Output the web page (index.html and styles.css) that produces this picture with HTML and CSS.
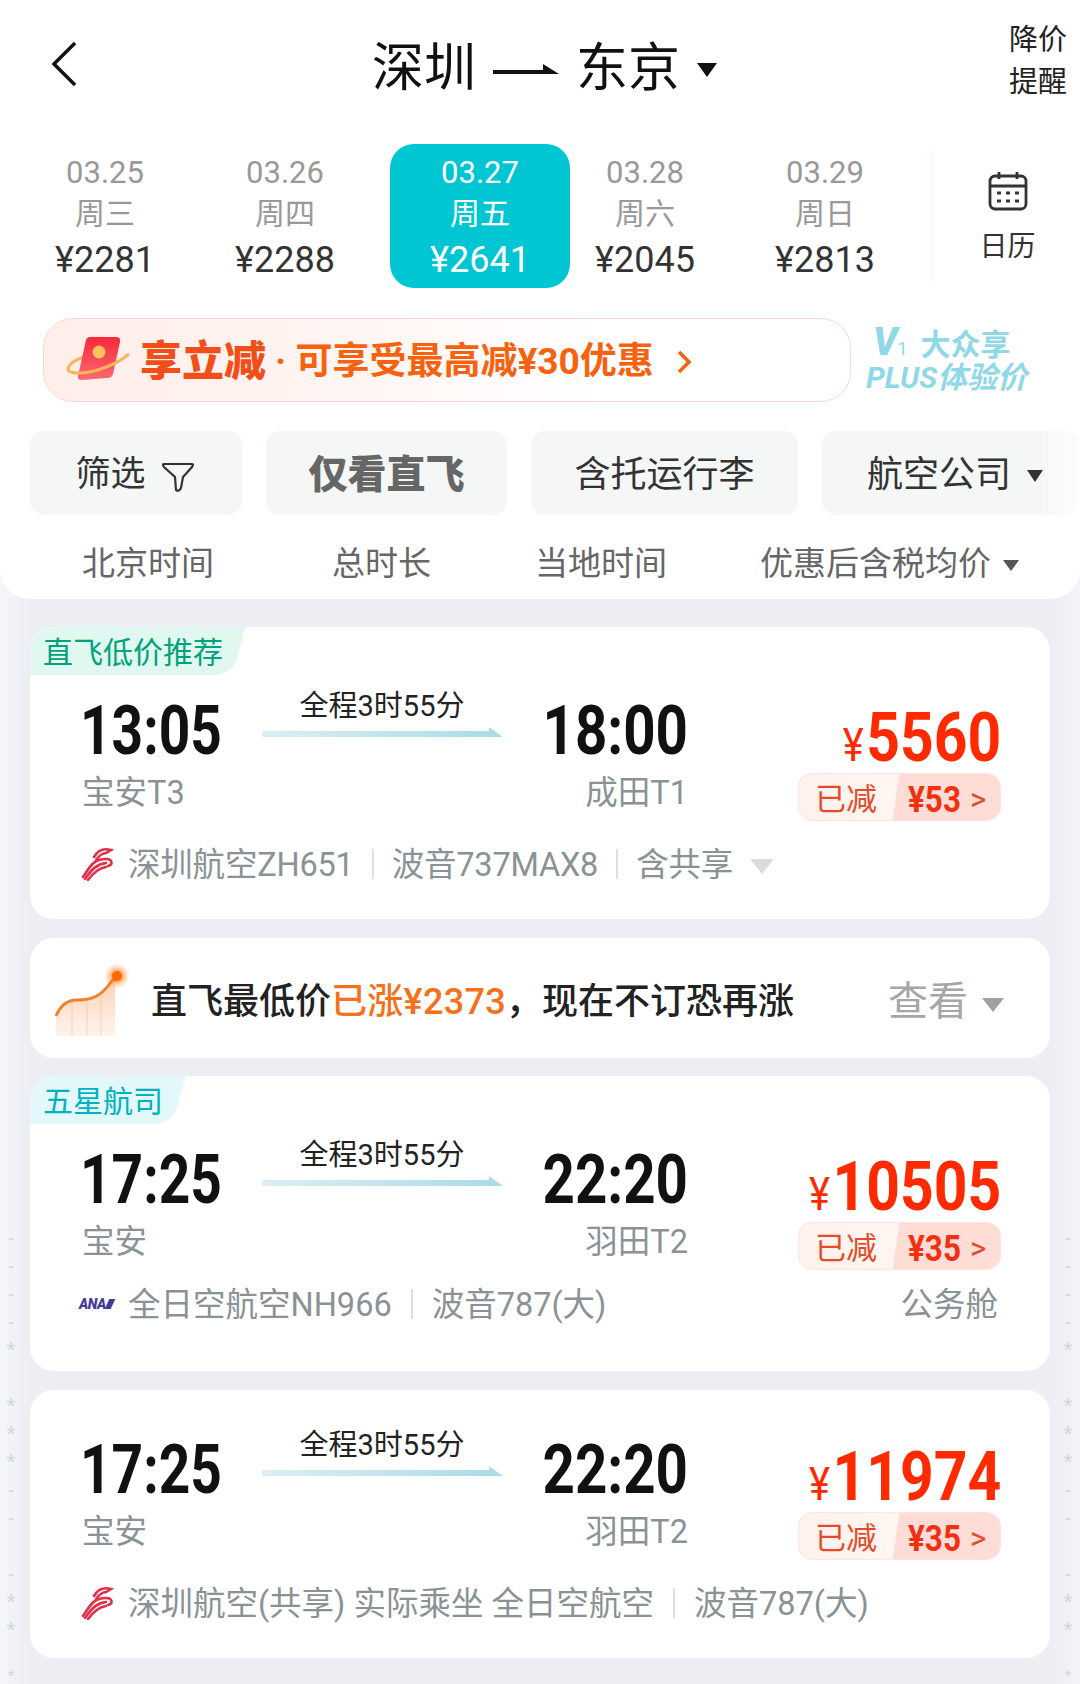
FILE: index.html
```html
<!DOCTYPE html>
<html lang="zh-CN">
<head>
    <meta charset="UTF-8">
    <meta name="viewport" content="width=device-width, initial-scale=1.0">
    <title>深圳 - 东京</title>
    <link rel="stylesheet" href="styles.css">
</head>
<body>
    <div class="edge-marks edge-left">
        <span>-</span><span>-</span><span>-</span><span>-</span><span>*</span><span>&nbsp;</span><span>*</span><span>*</span><span>*</span><span>-</span><span>-</span><span>&nbsp;</span><span>-</span><span>*</span><span>*</span><span>&nbsp;</span><span>*</span>
    </div>
    <div class="edge-marks edge-right">
        <span>-</span><span>-</span><span>-</span><span>-</span><span>*</span><span>&nbsp;</span><span>*</span><span>*</span><span>*</span><span>-</span><span>-</span><span>&nbsp;</span><span>-</span><span>*</span><span>*</span><span>&nbsp;</span><span>*</span>
    </div>

    <div class="panel">
        <div class="topbar">
            <svg class="back" width="24" height="44" viewBox="0 0 24 44"><path d="M23 1 L2 22 L23 43" fill="none" stroke="#111" stroke-width="3.400"/></svg>
            <div class="title">
                <span>深圳</span>
                <svg class="title-arrow" width="66" height="14" viewBox="0 0 66 14"><path d="M0 12 H66 L50 2 L50 8 H0 Z" fill="#111"/></svg>
                <span>东京</span>
                <i class="caret caret-title"></i>
            </div>
            <div class="remind">降价<br>提醒</div>
        </div>

        <div class="date-row">
            <div class="date-list">
                <div class="date-item"><div class="d">03.25</div><div class="w">周三</div><div class="p">¥2281</div></div>
                <div class="date-item"><div class="d">03.26</div><div class="w">周四</div><div class="p">¥2288</div></div>
                <div class="date-item active"><div class="d">03.27</div><div class="w">周五</div><div class="p">¥2641</div></div>
                <div class="date-item"><div class="d">03.28</div><div class="w">周六</div><div class="p">¥2045</div></div>
                <div class="date-item"><div class="d">03.29</div><div class="w">周日</div><div class="p">¥2813</div></div>
            </div>
            <div class="calendar">
                <svg width="40" height="40" viewBox="0 0 40 40">
                    <rect x="2" y="5" width="36" height="33" rx="5" fill="none" stroke="#333" stroke-width="2.800"/>
                    <path d="M2 15 H38" stroke="#333" stroke-width="2.800"/>
                    <path d="M11 1 V8 M29 1 V8" stroke="#333" stroke-width="2.800"/>
                    <path d="M9 22 h4 M18 22 h4 M27 22 h4 M9 30 h4 M18 30 h4 M27 30 h4" stroke="#333" stroke-width="3"/>
                </svg>
                <div class="calendar-text">日历</div>
            </div>
        </div>

        <div class="promo-row">
            <div class="banner">
                <svg class="banner-icon" width="72" height="60" viewBox="0 0 72 60">
                    <defs>
                        <linearGradient id="envelope" x1="0" y1="0" x2="0" y2="1"><stop offset="0" stop-color="#f8283c"/><stop offset="1" stop-color="#fb6a70"/></linearGradient>
                    </defs>
                    <path d="M11 42 C4 40 10 30 28 26" fill="none" stroke="#fbb45a" stroke-width="3"/>
                    <path d="M30 7 H56 Q61 7 60 12 L53 44 Q52 48 47 48 L22 50 Q17 50 18 46 L26 10 Q27 7 30 7 Z" fill="url(#envelope)"/>
                    <path d="M11 42 C24 46 52 38 69 24" fill="none" stroke="#fbb45a" stroke-width="3"/>
                    <circle cx="39" cy="22" r="6.500" fill="#fdc25a"/>
                </svg>
                <span class="banner-big">享立减</span>
                <span class="banner-text">· 可享受最高减¥30优惠</span>
                <svg class="banner-chevron" width="16" height="24" viewBox="0 0 16 24"><path d="M3 2 L13 12 L3 22" fill="none" stroke="#f5640f" stroke-width="3.600"/></svg>
            </div>
            <div class="plus">
                <div class="plus-top"><span class="plus-v">V</span><span class="plus-one">1</span><span class="plus-name">大众享</span></div>
                <div class="plus-bottom">PLUS体验价</div>
            </div>
        </div>

        <div class="filters">
            <div class="chip chip-filter"><span>筛选</span>
                <svg width="34" height="32" viewBox="0 0 34 32"><path d="M3 3 H31 Q33 3 31 6 L22 16 L20 27 Q18 31 15 29 L14 16 L3 6 Q1 3 3 3 Z" fill="none" stroke="#333" stroke-width="2.200"/></svg>
            </div>
            <div class="chip chip-direct">仅看直飞</div>
            <div class="chip chip-bag">含托运行李</div>
            <div class="chip chip-air">航空公司<i class="caret caret-chip"></i></div>
        </div>

        <div class="sort-row">
            <div class="sort-a">北京时间</div>
            <div class="sort-b">总时长</div>
            <div class="sort-c">当地时间</div>
            <div class="sort-d">优惠后含税均价<i class="caret caret-sort"></i></div>
        </div>
    </div>

    <div class="list">
        <div class="flight flight-share">
            <div class="tag tag-green">直飞低价推荐</div>
            <div class="times">
                <div class="dep"><div class="time">13:05</div><div class="port">宝安T3</div></div>
                <div class="mid"><div class="dur">全程3时55分</div><div class="line"></div></div>
                <div class="arr"><div class="time">18:00</div><div class="port">成田T1</div></div>
                <div class="fare">
                    <div class="price"><span class="yen">¥</span>5560</div>
                    <div class="cut"><span class="cut-l">已减</span><span class="cut-r"><b>¥53</b><em>&gt;</em></span></div>
                </div>
            </div>
            <div class="info">
                <svg class="logo" width="34" height="36" viewBox="10 6 34 36"><g fill="none" stroke="#e0304a" stroke-width="2.600" stroke-linecap="round"><path d="M24 18 C28 11 34 9 41 11 L36 14 C32 14 29 17 26 21"/><path d="M13 38 C20 28 23 20 36 20 C43 20 43 26 38 27"/><path d="M15 40 C22 30 27 25 36 24"/><path d="M18 41 C24 33 29 29 36 28"/></g></svg>
                <span>深圳航空ZH651</span><i class="sep"></i><span>波音737MAX8</span><i class="sep"></i><span>含共享</span><i class="caret caret-info"></i>
            </div>
        </div>

        <div class="alert">
            <svg class="alert-icon" width="90" height="90" viewBox="0 0 90 90">
                <defs>
                    <linearGradient id="area" x1="0" y1="0" x2="0" y2="1"><stop offset="0" stop-color="#fb9a5a" stop-opacity=".5"/><stop offset="1" stop-color="#fdd0b0" stop-opacity=".25"/></linearGradient>
                    <radialGradient id="halo"><stop offset=".35" stop-color="#ff7a1a" stop-opacity=".7"/><stop offset="1" stop-color="#ffb070" stop-opacity="0"/></radialGradient>
                </defs>
                <path d="M11 60 C16 48 24 44 32 44 C48 44 56 40 66 26 L70 22 V80 H11 Z" fill="url(#area)"/>
                <path d="M27 46 V80 M42 44 V80 M56 38 V80" stroke="#f8a878" stroke-width="1" opacity=".4"/>
                <circle cx="72" cy="20" r="13" fill="url(#halo)"/>
                <path d="M11 60 C16 48 24 44 32 44 C48 44 56 40 66 26 L72 20" fill="none" stroke="#f5802a" stroke-width="3"/>
                <circle cx="72" cy="20" r="5" fill="#ff6a00"/>
            </svg>
            <div class="alert-text">直飞最低价<span class="up">已涨¥2373</span>，现在不订恐再涨</div>
            <div class="alert-more">查看<i class="caret caret-more"></i></div>
        </div>

        <div class="flight flight-cabin">
            <div class="tag tag-cyan">五星航司</div>
            <div class="times">
                <div class="dep"><div class="time">17:25</div><div class="port">宝安</div></div>
                <div class="mid"><div class="dur">全程3时55分</div><div class="line"></div></div>
                <div class="arr"><div class="time">22:20</div><div class="port">羽田T2</div></div>
                <div class="fare">
                    <div class="price"><span class="yen">¥</span>10505</div>
                    <div class="cut"><span class="cut-l">已减</span><span class="cut-r"><b>¥35</b><em>&gt;</em></span></div>
                </div>
            </div>
            <div class="info">
                <span class="ana">ANA</span>
                <span>全日空航空NH966</span><i class="sep"></i><span>波音787(大)</span>
                <span class="cabin">公务舱</span>
            </div>
        </div>

        <div class="flight flight-plain">
            <div class="times">
                <div class="dep"><div class="time">17:25</div><div class="port">宝安</div></div>
                <div class="mid"><div class="dur">全程3时55分</div><div class="line"></div></div>
                <div class="arr"><div class="time">22:20</div><div class="port">羽田T2</div></div>
                <div class="fare">
                    <div class="price"><span class="yen">¥</span>11974</div>
                    <div class="cut"><span class="cut-l">已减</span><span class="cut-r"><b>¥35</b><em>&gt;</em></span></div>
                </div>
            </div>
            <div class="info">
                <svg class="logo" width="34" height="36" viewBox="10 6 34 36"><g fill="none" stroke="#e0304a" stroke-width="2.600" stroke-linecap="round"><path d="M24 18 C28 11 34 9 41 11 L36 14 C32 14 29 17 26 21"/><path d="M13 38 C20 28 23 20 36 20 C43 20 43 26 38 27"/><path d="M15 40 C22 30 27 25 36 24"/><path d="M18 41 C24 33 29 29 36 28"/></g></svg>
                <span>深圳航空(共享) 实际乘坐 全日空航空</span><i class="sep"></i><span>波音787(大)</span>
            </div>
        </div>
    </div>
</body>
</html>
```

FILE: styles.css
```css
* {
    box-sizing: border-box;
}
html, body {
    margin: 0;
    height: 1684px;
    overflow: hidden;
}
body {
    position: relative;
    width: 1080px;
    font-family: Roboto, "Noto Sans CJK SC", sans-serif;
    background: linear-gradient(90deg, #f4f6fb 0, #eceef3 30px, #eceef3 1050px, #f2f4fa 1080px);
    color: #333;
}
i, em {
    font-style: normal;
}

/* faint marks down both edges */
.edge-marks {
    position: absolute;
    top: 1224px;
    width: 30px;
    display: flex;
    flex-direction: column;
    align-items: center;
    color: #d4d6db;
    font-size: 20px;
    line-height: 28px;
}
.edge-marks span:last-child {
    margin-top: -3px;
    font-size: 14px;
    line-height: 14px;
}
.edge-left {
    left: 0;
    margin-left: -4px;
}
.edge-right {
    right: 0;
    margin-right: -3px;
}

.panel {
    background: #fff;
    height: 599px;
    border-radius: 0 0 30px 30px;
}

.caret {
    display: inline-block;
    width: 0;
    height: 0;
    border-style: solid;
    border-color: #333 transparent transparent transparent;
}

/* top bar */
.topbar {
    height: 144px;
    display: flex;
    align-items: flex-start;
    padding-left: 52px;
}
.back {
    margin-top: 42px;
}
.title {
    margin-left: 296px;
    margin-top: 39px;
    display: flex;
    align-items: center;
    font-size: 52px;
    line-height: 60px;
    color: #111;
}
.title-arrow {
    margin: 0 17px 0 17px;
}
.caret-title {
    margin-left: 17px;
    margin-top: 2px;
    border-width: 14px 10px 0 10px;
    border-top-color: #111;
}
.remind {
    margin-left: auto;
    margin-right: 13px;
    margin-top: 19px;
    font-size: 29px;
    line-height: 42px;
    color: #222;
}

/* date strip */
.date-row {
    display: flex;
    height: 144px;
}
.date-list {
    width: 935px;
    padding-left: 15px;
    display: flex;
}
.date-item {
    width: 180px;
    text-align: center;
    border-radius: 24px;
    padding-top: 9px;
}
.date-item .d {
    font-size: 31px;
    line-height: 40px;
    color: #999;
}
.date-item .w {
    font-size: 30px;
    line-height: 42px;
    color: #999;
}
.date-item .p {
    margin-top: 3px;
    font-size: 36px;
    line-height: 44px;
    color: #333;
}
.date-item.active {
    margin-left: 15px;
    margin-right: -15px;
    background: #00c6d4;
}
.date-item.active .d, .date-item.active .w, .date-item.active .p {
    color: #fff;
}
.calendar {
    flex: 1;
    margin-top: -4px;
    height: 152px;
    box-shadow: -10px 0 12px -10px rgba(0,0,0,0.05);
    text-align: center;
    padding-top: 31px;
}
.calendar svg {
    display: block;
    margin: 0 auto;
}
.calendar-text {
    margin-top: 16px;
    font-size: 28px;
    line-height: 40px;
    color: #333;
}

/* promo banner */
.promo-row {
    display: flex;
    height: 84px;
    margin-top: 30px;
    padding-left: 43px;
}
.banner {
    width: 808px;
    height: 84px;
    border: 1px solid #fbd8cd;
    border-radius: 30px;
    background: linear-gradient(90deg, #ffeeea 0, #fff3f0 30%, #fff 70%);
    display: flex;
    align-items: center;
    padding-left: 16px;
}
.banner-icon {
    flex-shrink: 0;
}
.banner-big {
    margin-left: 8px;
    margin-top: 3px;
    font-size: 42px;
    font-weight: 900;
    color: #f24e1a;
    line-height: 50px;
}
.banner-text {
    margin-left: 9px;
    margin-top: 3px;
    font-size: 37px;
    font-weight: 700;
    color: #f6620f;
    line-height: 50px;
    white-space: nowrap;
}
.banner-chevron {
    margin-left: 22px;
    margin-top: 3px;
}
.plus {
    margin-left: 15px;
    font-weight: 700;
    color: #8fd9e6;
    white-space: nowrap;
}
.plus-top {
    display: flex;
    align-items: baseline;
    margin-left: 7px;
    height: 42px;
    line-height: 42px;
    font-size: 30px;
    margin-top: 3px;
}
.plus-v {
    font-size: 38px;
    font-weight: 900;
    font-style: italic;
}
.plus-one {
    font-size: 18px;
    font-weight: 400;
}
.plus-name {
    margin-left: 13px;
    font-size: 30px;
}
.plus-bottom {
    font-size: 30px;
    font-style: italic;
    line-height: 36px;
    margin-top: -3px;
}

/* filter chips */
.filters {
    position: relative;
    display: flex;
    gap: 24px;
    margin-top: 29px;
    padding-left: 30px;
}
.filters::after {
    content: "";
    position: absolute;
    right: 0;
    top: 0;
    width: 38px;
    height: 100%;
    background: linear-gradient(90deg, rgba(255,255,255,0.2), rgba(255,255,255,0.7));
}
.chip {
    height: 84px;
    padding-top: 3px;
    background: #f5f6f6;
    border-radius: 14px;
    display: flex;
    align-items: center;
    justify-content: center;
    font-size: 36px;
    line-height: 44px;
    color: #333;
    flex-shrink: 0;
}
.chip-filter {
    width: 212px;
    gap: 15px;
    font-size: 35px;
    padding-right: 2px;
}
.chip-filter svg {
    margin-top: 5px;
}
.chip-direct {
    width: 241px;
    font-size: 39px;
    font-weight: 900;
    color: #666;
}
.chip-bag {
    width: 267px;
}
.chip-air {
    width: 257px;
    justify-content: flex-start;
    padding-left: 45px;
}
.caret-chip {
    margin-left: 16px;
    margin-top: 2px;
    border-width: 12px 8px 0 8px;
}

/* sort row */
.sort-row {
    display: flex;
    margin-top: 27px;
    font-size: 33px;
    line-height: 44px;
    color: #666;
}
.sort-a {
    margin-left: 82px;
    width: 250px;
}
.sort-b {
    width: 203px;
}
.sort-c {
    width: 225px;
}
.caret-sort {
    margin-left: 12px;
    margin-bottom: 4px;
    border-width: 11px 8px 0 8px;
    border-top-color: #555;
}

/* flight cards */
.list {
    padding: 28px 30px 0;
}
.flight {
    position: relative;
    height: 292px;
    margin-bottom: 19px;
    padding: 60px 49px 0 52px;
    background: #fff;
    border-radius: 24px;
    overflow: hidden;
}
.flight-cabin {
    height: 295px;
}
.flight-plain {
    height: 268px;
    padding-top: 36px;
}
.tag {
    position: absolute;
    left: 0;
    top: 0;
    height: 48px;
    padding: 0 24px 0 13px;
    font-size: 30px;
    line-height: 52px;
    z-index: 0;
    overflow: hidden;
}
.tag::before {
    content: "";
    position: absolute;
    left: -30px;
    right: 8px;
    top: 0;
    bottom: 0;
    transform: skewX(-15deg);
    border-radius: 0 0 16px 0;
    z-index: -1;
}
.tag-green {
    color: #00a27a;
}
.tag-green::before {
    background: #e0f8ef;
}
.tag-cyan {
    color: #00b2bf;
}
.tag-cyan::before {
    background: #e2f8fa;
}
.times {
    display: flex;
    height: 136px;
}
.dep {
    width: 180px;
    padding-top: 13px;
}
.mid {
    width: 241px;
}
.arr {
    width: 185px;
    padding-top: 13px;
    text-align: right;
}
/* no condensed face here, so squeeze the digits */
.time {
    margin-left: -2px;
    font-weight: 700;
    font-size: 68px;
    line-height: 62px;
    color: #111;
    transform: scaleX(0.81);
    transform-origin: left center;
    white-space: nowrap;
}
.arr .time {
    transform: scaleX(0.83);
    transform-origin: right center;
}
.port {
    margin-top: 11px;
    font-size: 32.500px;
    line-height: 40px;
    color: #8a9296;
}
.dur {
    text-align: center;
    font-size: 29px;
    line-height: 36px;
    color: #222;
    padding-right: 1px;
    margin-top: 1px;
}
.line {
    margin-top: 3px;
    height: 10px;
    background: linear-gradient(90deg, #dbeff4, #a9dbe6);
    clip-path: polygon(0 4px, 227px 4px, 227px 0, 100% 100%, 0 100%);
}
.fare {
    flex: 1;
    display: flex;
    flex-direction: column;
    align-items: flex-end;
    padding-top: 19px;
}
.price {
    flex-shrink: 0;
    height: 62px;
    font-weight: 700;
    font-size: 68px;
    line-height: 64px;
    color: #ff2a00;
    white-space: nowrap;
    transform: scaleX(0.865);
    transform-origin: right center;
}
.yen {
    font-weight: 400;
    font-size: 46px;
    letter-spacing: 3px;
}
.cut {
    flex-shrink: 0;
    margin-top: 5px;
    width: 203px;
    height: 48px;
    display: flex;
    overflow: hidden;
    border: 1px solid #fde4dc;
    border-radius: 14px;
    background: linear-gradient(90deg, #fff1ec, #fffaf8);
}
.cut-l {
    width: 97px;
    padding-left: 16px;
    font-size: 31px;
    line-height: 52px;
    color: #e64a28;
}
.cut-r {
    position: relative;
    flex: 1;
    display: flex;
    align-items: center;
    padding-left: 12px;
    padding-top: 5px;
    z-index: 0;
}
.cut-r::before {
    content: "";
    position: absolute;
    left: 0;
    right: -10px;
    top: -2px;
    bottom: -2px;
    transform: skewX(-8deg);
    background: #ffdcd6;
    z-index: -1;
}
.cut-r b {
    width: 62px;
    font-size: 37px;
    color: #f0300f;
    transform: scaleX(0.85);
    transform-origin: left center;
}
.cut-r em {
    font-size: 31px;
    color: #e64a28;
}

.info {
    display: flex;
    align-items: center;
    height: 40px;
    margin-top: 22px;
    font-size: 32.500px;
    line-height: 40px;
    color: #8a9296;
    white-space: nowrap;
}
.flight-cabin .info {
    margin-top: 13px;
}
.logo {
    margin-left: -2px;
    margin-right: 14px;
    margin-top: -4px;
    flex-shrink: 0;
}
.ana {
    width: 49px;
    margin-left: -3px;
    margin-top: -3px;
    display: flex;
    align-items: center;
    font-size: 14px;
    font-style: italic;
    font-weight: 900;
    color: #46399a;
    letter-spacing: -0.500px;
}
.ana::after {
    content: "";
    width: 6px;
    height: 10px;
    margin-left: 1px;
    background: #46399a;
    transform: skewX(-25deg);
}
.sep {
    width: 2px;
    height: 30px;
    margin: -3px 19px 0;
    background: #dde0e3;
}
.flight-share .info {
    letter-spacing: -0.200px;
}
.flight-share .sep {
    margin: -3px 18px 0;
}
.caret-info {
    margin-left: 17px;
    margin-top: 3px;
    border-width: 15px 12px 0 12px;
    border-top-color: #dcdcdc;
}
.cabin {
    margin-left: auto;
    margin-right: 3px;
}

/* price alert */
.alert {
    display: flex;
    align-items: center;
    height: 120px;
    margin-bottom: 18px;
    background: #fff;
    border-radius: 24px;
    padding-left: 15px;
}
.alert-icon {
    flex-shrink: 0;
    margin-top: 6px;
}
.alert-text {
    margin-left: 16px;
    margin-top: 8px;
    font-size: 36px;
    line-height: 44px;
    font-weight: 500;
    color: #222;
    white-space: nowrap;
}
.up {
    letter-spacing: 0.300px;
    color: #f5711a;
}
.alert-more {
    margin-left: auto;
    margin-right: 46px;
    margin-top: 8px;
    display: flex;
    align-items: center;
    font-size: 40px;
    line-height: 50px;
    color: #a6a6a6;
}
.caret-more {
    margin-left: 14px;
    margin-top: 6px;
    border-width: 14px 11px 0 11px;
    border-top-color: #a0a0a0;
}
```
